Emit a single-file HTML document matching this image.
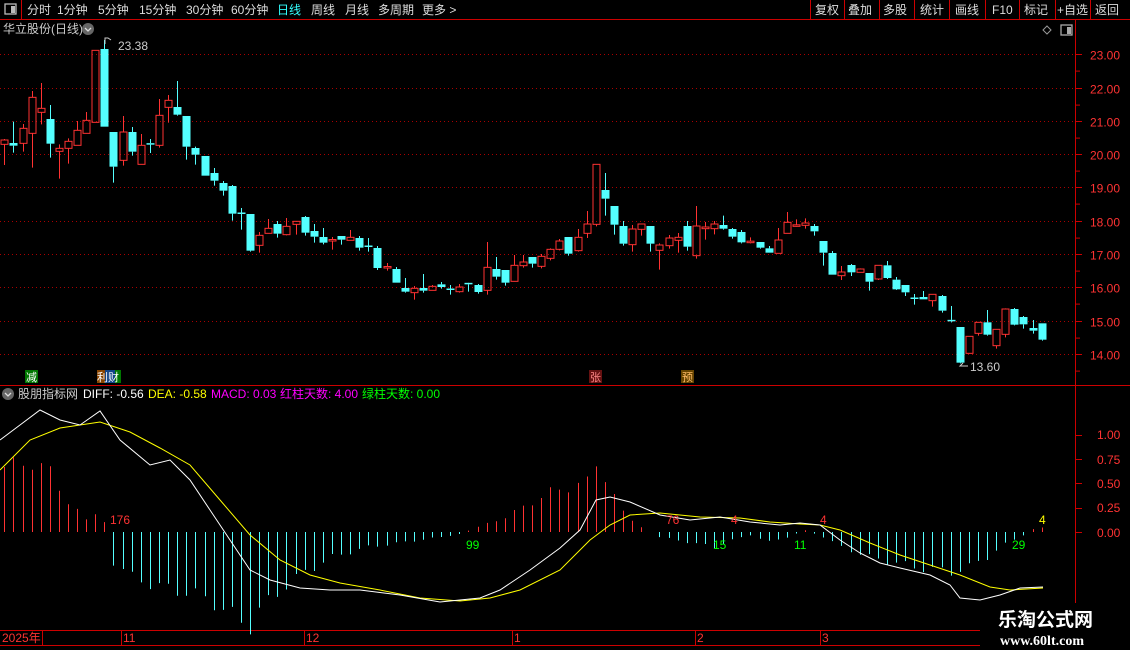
<!DOCTYPE html>
<html><head><meta charset="utf-8"><style>
html,body{margin:0;padding:0;background:#000;width:1130px;height:650px;overflow:hidden;font-family:"Liberation Sans","Noto Sans CJK SC",sans-serif;}
svg{position:absolute;left:0;top:0}
</style></head><body>
<svg id="s" width="1130" height="650" xmlns="http://www.w3.org/2000/svg" font-family="Liberation Sans, Noto Sans CJK SC, sans-serif">
<rect width="1130" height="650" fill="#000"/>
<!-- top bar -->
<g fill="#ddd" font-size="12">
<text x="27" y="14">分时</text><text x="57" y="14">1分钟</text><text x="98" y="14">5分钟</text><text x="139" y="14">15分钟</text><text x="186" y="14">30分钟</text><text x="231" y="14">60分钟</text>
<text x="277" y="14" fill="#3ff">日线</text><text x="311" y="14">周线</text><text x="345" y="14">月线</text><text x="378" y="14">多周期</text><text x="422" y="14">更多 &gt;</text>
<text x="815" y="14">复权</text><text x="848" y="14">叠加</text><text x="883" y="14">多股</text><text x="920" y="14">统计</text><text x="955" y="14">画线</text><text x="992" y="14">F10</text><text x="1024" y="14">标记</text><text x="1057" y="14">+自选</text><text x="1095" y="14">返回</text>
<text x="3" y="33" fill="#ccc">华立股份(日线)</text>
</g>
<rect x="5" y="4" width="11" height="10" fill="none" stroke="#bbb" stroke-width="1.3"/><rect x="11" y="6" width="4" height="7" fill="#bbb"/>
<circle cx="88" cy="29" r="6" fill="#666"/><path d="M85 28l3 3 3-3" stroke="#ddd" fill="none" stroke-width="1.3"/>
<path d="M1043 30l4-4 4 4-4 4z" fill="none" stroke="#999"/>
<rect x="1061" y="25" width="11" height="10" fill="none" stroke="#aaa" stroke-width="1.3"/><rect x="1067" y="27" width="4" height="7" fill="#aaa"/>
<g stroke="#c00" stroke-width="1">
<line x1="0" y1="19.5" x2="1130" y2="19.5"/>
<line x1="21.5" y1="0" x2="21.5" y2="19"/>
<line x1="810.5" y1="0" x2="810.5" y2="19"/><line x1="844.5" y1="0" x2="844.5" y2="19"/><line x1="879.5" y1="0" x2="879.5" y2="19"/><line x1="914.5" y1="0" x2="914.5" y2="19"/><line x1="949.5" y1="0" x2="949.5" y2="19"/><line x1="985.5" y1="0" x2="985.5" y2="19"/><line x1="1019.5" y1="0" x2="1019.5" y2="19"/><line x1="1055.5" y1="0" x2="1055.5" y2="19"/><line x1="1090.5" y1="0" x2="1090.5" y2="19"/>
<line x1="1075.5" y1="20" x2="1075.5" y2="645"/>
<line x1="0" y1="385.5" x2="1130" y2="385.5"/>
<line x1="0" y1="630.5" x2="1130" y2="630.5"/>
<line x1="0" y1="645.5" x2="980" y2="645.5"/>
<line x1="42.5" y1="631" x2="42.5" y2="645"/><line x1="121.5" y1="631" x2="121.5" y2="645"/><line x1="304.5" y1="631" x2="304.5" y2="645"/><line x1="512.5" y1="631" x2="512.5" y2="645"/><line x1="695.5" y1="631" x2="695.5" y2="645"/><line x1="820.5" y1="631" x2="820.5" y2="645"/>
</g>
<g id="grid"></g>
<g fill="#f33" font-size="12">
<text x="2" y="642">2025年</text><text x="123" y="642">11</text><text x="306" y="642">12</text><text x="514" y="642">1</text><text x="697" y="642">2</text><text x="822" y="642">3</text>
</g>
<g id="axis" fill="#f33" font-size="12"></g>
<g id="candles"></g>
<g id="macd"></g>
<!-- labels -->
<g font-size="11">
<path d="M105 44v-6h3l3 2" stroke="#ccc" fill="none"/><text x="118" y="50" fill="#ccc" font-size="12">23.38</text>
<path d="M968 366h-8l3-3" stroke="#ccc" fill="none"/><text x="970" y="371" fill="#ccc" font-size="12">13.60</text>
<rect x="25" y="370" width="13" height="13" fill="#070"/><text x="26" y="381" fill="#fff">减</text>
<rect x="97" y="370" width="8" height="13" fill="#840"/><rect x="105" y="370" width="10" height="13" fill="#148"/><rect x="115" y="370" width="6" height="13" fill="#070"/><text x="97" y="381" fill="#fff">利财</text>
<rect x="589" y="370" width="13" height="13" fill="#611"/><text x="590" y="381" fill="#f88">张</text>
<rect x="681" y="370" width="13" height="13" fill="#640"/><text x="682" y="381" fill="#fb6">预</text>
</g>
<circle cx="8" cy="394" r="6" fill="#666"/><path d="M5 393l3 3 3-3" stroke="#ddd" fill="none" stroke-width="1.3"/>
<g font-size="12">
<text x="18" y="398" fill="#ccc">股朋指标网</text>
<text x="83" y="398" fill="#fff">DIFF: -0.56</text>
<text x="148" y="398" fill="#ff0">DEA: -0.58</text>
<text x="211" y="398" fill="#f0f">MACD: 0.03</text>
<text x="280" y="398" fill="#f0f">红柱天数: 4.00</text>
<text x="362" y="398" fill="#0f0">绿柱天数: 0.00</text>
</g>
<g font-size="12">
<text x="110" y="524" fill="#f33">176</text><text x="466" y="549" fill="#0f0">99</text><text x="666" y="524" fill="#f33">76</text><text x="713" y="549" fill="#0f0">15</text><text x="731" y="524" fill="#f33">4</text><text x="794" y="549" fill="#0f0">11</text><text x="820" y="524" fill="#f33">4</text><text x="1012" y="549" fill="#0f0">29</text><text x="1039" y="524" fill="#ff0">4</text>
</g>
<g fill="#f33" font-size="12">
<text x="1097" y="439">1.00</text><text x="1097" y="464">0.75</text><text x="1097" y="488">0.50</text><text x="1097" y="512">0.25</text><text x="1097" y="537">0.00</text>
</g>
<rect x="980" y="603" width="150" height="47" fill="#000"/>
<text x="998" y="626" fill="#fff" font-size="19" font-weight="bold" font-family="Noto Sans CJK SC, sans-serif">乐淘公式网</text>
<text x="1000" y="645" fill="#fff" font-size="14" font-weight="bold" font-family="Liberation Serif, serif">www.60lt.com</text>
</svg>
<script>
const NS="http://www.w3.org/2000/svg";
function el(p,t,a){const e=document.createElementNS(NS,t);for(const k in a)e.setAttribute(k,a[k]);p.appendChild(e);return e;}
const grid=document.getElementById('grid'),axis=document.getElementById('axis');
const yp=p=>220.7+(18-p)*33.3;
for(let p=14;p<=23;p++){const y=Math.round(yp(p))+.5;el(grid,'line',{x1:0,y1:y,x2:1075,y2:y,stroke:'#a00','stroke-dasharray':'1,3'});
 const t=el(axis,'text',{x:1090,y:y+5});t.textContent=p.toFixed(2);
 el(axis,'line',{x1:1076,y1:y,x2:1082,y2:y,stroke:'#c00'});el(axis,'line',{x1:1076,y1:y+16.6,x2:1080,y2:y+16.6,stroke:'#c00'});}
[435,459,483,508,532].forEach(y=>el(axis,'line',{x1:1076,y1:y+.5,x2:1082,y2:y+.5,stroke:'#c00'}));
// candle data: [top,bot,hi,lo,color] in zoom coords
const A=[[300,313,297,375,1],[309,317,245,338,0],[265,310,252,335,1],[172,280,153,383,1],[205,217,129,253,1],[237,311,195,353,0],[325,334,313,416,1],[304,325,295,371,1],[271,316,243,316,1],[241,280,216,280,1],[31,247,31,247,1],[27,260,0,260,0],[276,380,276,428,0],[276,361,228,377,1],[276,335,261,347,0],[316,373,282,373,1],[311,313,297,339,0],[226,316,177,323,1],[181,202,165,248,1],[201,224,123,227,0],[228,320,228,359,0],[324,344,320,374,0],[348,407,348,407,0],[399,422,384,437,0],[429,452,423,467,0],[438,521,435,542,0],[519,521,504,569,0],[522,632,522,635,0],[586,616,576,638,1],[565,580,537,580,1],[552,581,543,593,0],[559,584,534,586,1],[544,553,544,584,1],[531,578,528,587,0],[573,590,552,608,0],[591,608,564,613,0],[600,604,591,629,1],[588,599,588,614,0],[592,601,570,601,1],[594,623,588,632,0],[618,622,594,635,0]];
const B=[[294,354,288,360,0],[351,355,339,362,1],[357,398,351,398,0],[414,425,384,428,0],[415,428,408,449,1],[414,422,372,428,0],[409,421,405,421,1],[403,411,396,416,0],[417,419,405,434,0],[411,425,402,428,1],[400,404,400,425,0],[405,426,402,431,0],[352,421,276,434,1],[357,380,321,389,0],[360,398,360,407,0],[346,394,315,394,1],[336,347,315,353,1],[321,341,321,353,0],[319,349,312,355,1],[298,325,295,331,1],[273,298,267,301,1],[261,311,261,317,0],[262,302,237,305,1],[222,250,183,264,1],[43,223,43,229,1],[120,146,69,197,0],[168,224,168,254,0],[228,281,213,287,0],[237,284,225,305,1],[222,238,222,257,1],[228,281,228,305,0],[285,301,280,359,1],[264,287,255,296,1],[262,271,249,308,1],[228,290,213,302,0],[228,317,168,326,1],[231,236,216,269,1],[222,236,213,253,1],[225,236,197,239,0],[237,260,234,266,0]];
const C=[[126,157,120,160,0],[155,158,142,160,1],[156,173,156,176,0],[175,188,168,188,0],[150,190,114,190,1],[97,130,66,130,1],[106,110,88,110,1],[99,106,85,116,1],[108,124,102,137,0],[153,188,153,227,0],[189,254,183,254,0],[246,257,228,270,1],[225,247,222,258,0],[237,247,235,247,1],[249,275,249,302,0],[226,267,226,270,1],[226,264,213,267,0],[269,298,261,300,0],[285,307,285,318,0],[324,328,312,344,0],[321,328,303,328,0],[313,332,313,350,1],[318,362,315,368,0],[391,395,348,397,0],[411,518,411,520,0],[439,490,439,490,1],[397,430,397,437,1],[397,434,360,437,0],[418,467,418,476,1],[357,433,355,442,1],[357,404,354,406,0],[381,403,378,416,0],[414,422,390,431,0],[400,449,400,452,0]];
const D=[];A.forEach(a=>D.push(a.map((v,j)=>j<4?v/3+40:v)));B.forEach(a=>D.push(a.map((v,j)=>j<4?v/3+150:v)));C.forEach(a=>D.push(a.map((v,j)=>j<4?v/3+190:v)));
const cg=document.getElementById('candles');
D.forEach((d,i)=>{const x=Math.round(4.3+9.1*i);const col=d[4]?'#ff3232':'#54ffff';
 let [t,b,h,l]=d;if(b-t<1.5){t-=0.5;b=t+1.5}
 el(cg,'line',{x1:x+.5,y1:h,x2:x+.5,y2:t,stroke:col});el(cg,'line',{x1:x+.5,y1:b,x2:x+.5,y2:l,stroke:col});
 if(d[4])el(cg,'rect',{x:x-3,y:t,width:7,height:b-t,fill:'none',stroke:col,'stroke-width':1});
 else el(cg,'rect',{x:x-3.5,y:t,width:8,height:b-t,fill:col});});
// MACD bars
const K=[[0,65],[3,70],[5,60],[7,30],[9,12],[10,20],[11,10],[12,-30],[14,-45],[17,-55],[20,-60],[23,-70],[25,-85],[27,-92],[28,-80],[30,-60],[33,-40],[36,-25],[40,-15],[44,-10],[48,-5],[50,-2],[52,5],[55,15],[58,30],[60,40],[64,50],[65,70],[66,55],[67,35],[68,20],[70,5],[72,-5],[75,-10],[78,-15],[80,-8],[82,-3],[84,-10],[86,-5],[88,2],[90,-5],[92,-15],[95,-25],[100,-35],[104,-40],[106,-35],[108,-25],[110,-12],[112,-3],[113,3],[114,5]];
function interp(i){for(let k=0;k<K.length-1;k++){if(i>=K[k][0]&&i<=K[k+1][0]){const f=(i-K[k][0])/(K[k+1][0]-K[k][0]||1);return K[k][1]+f*(K[k+1][1]-K[k][1]);}}return 0;}
const mg=document.getElementById('macd');
for(let i=0;i<115;i++){const x=Math.round(4.3+9.1*i)+.5;let v=interp(i)*(1+0.12*Math.sin(i*1.7));
 el(mg,'line',{x1:x,y1:532,x2:x,y2:532-v,stroke:v>0?'#ff3232':'#54ffff'});}
const W=[[0,440],[20,425],[40,410],[60,420],[80,425],[100,411],[120,440],[150,465],[170,460],[190,480],[210,510],[230,540],[250,570],[270,580],[300,588],[330,590],[360,590],[400,595],[440,602],[460,600],[480,598],[500,590],[530,570],[560,548],[580,530],[596,500],[610,497],[630,502],[660,515],[690,520],[720,517],[750,522],[780,525],[800,523],[820,525],[840,540],[860,553],[880,563],[900,568],[930,575],[950,585],[960,598],[980,600],[1000,595],[1020,588],[1043,587]];
const Y=[[0,470],[30,440],[60,428],[100,422],[130,432],[160,448],[190,465],[220,500],[250,535],[280,560],[310,575],[340,583],[380,590],[420,598],[460,601],[490,598],[520,590],[560,570],[590,540],[610,525],[630,515],[660,513],[700,517],[740,518],[770,522],[800,524],[820,525],[840,530],[870,543],[900,555],[930,565],[960,575],[990,587],[1010,590],[1043,588]];
el(mg,'polyline',{points:Y.map(p=>p.join(',')).join(' '),fill:'none',stroke:'#ff0','stroke-width':1});
el(mg,'polyline',{points:W.map(p=>p.join(',')).join(' '),fill:'none',stroke:'#fff','stroke-width':1});
</script>
</body></html>
